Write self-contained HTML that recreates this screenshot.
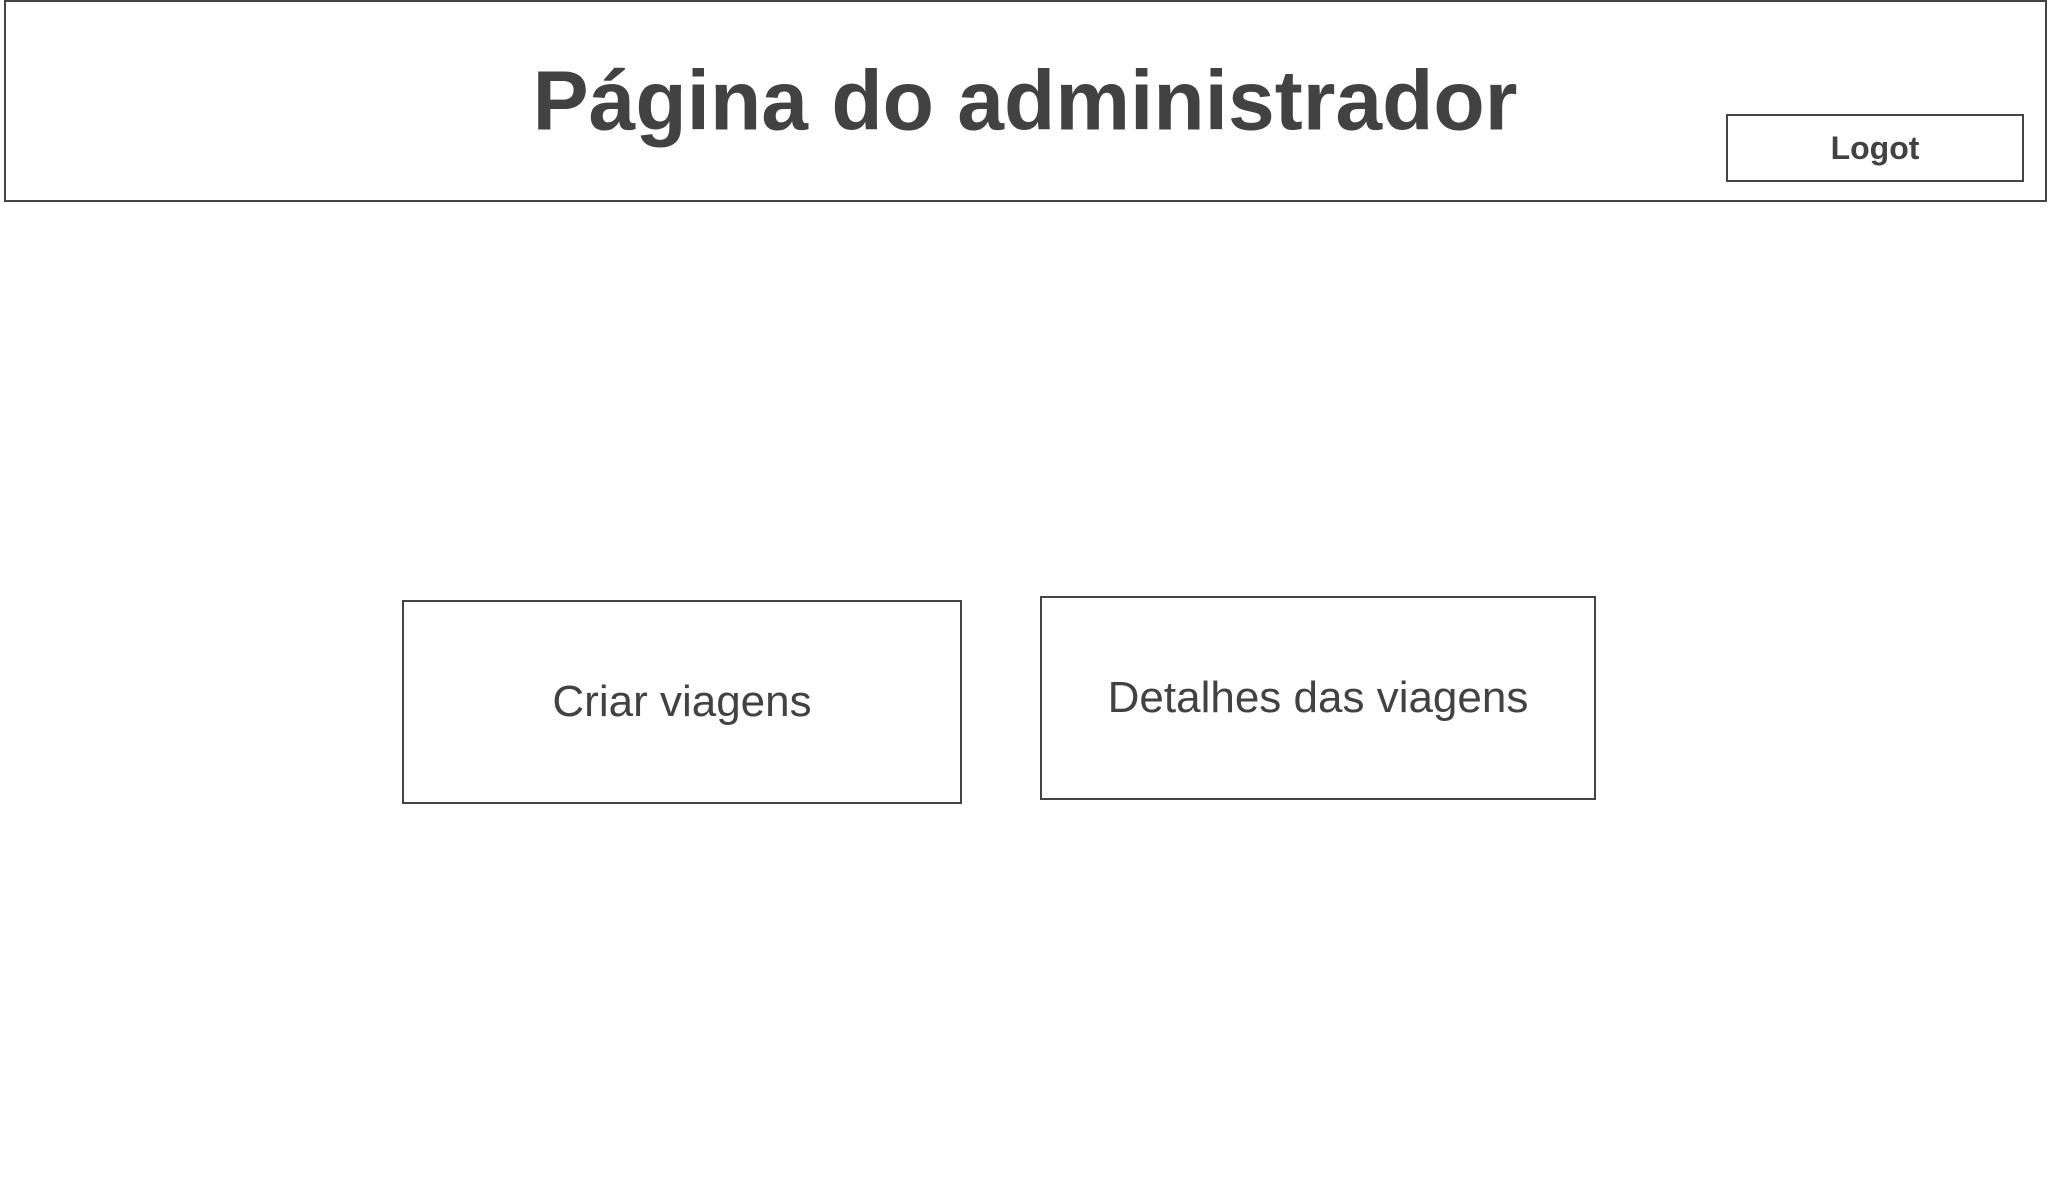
<!DOCTYPE html>
<html><head><meta charset="utf-8"><style>
html,body{margin:0;padding:0;background:#fff;width:2048px;height:1200px;overflow:hidden;font-family:"Liberation Sans",Arial,sans-serif;color:#424242}
.b{position:absolute;box-sizing:border-box;border:2px solid #444;display:flex;align-items:center;justify-content:center}
.t{position:absolute;white-space:nowrap;transform:translate(-50%,-50%)}
</style></head><body>
<div class="b" style="left:4px;top:0;width:2043px;height:202px"></div>
<div class="t" style="left:1025px;top:101px;font-size:84px;font-weight:bold">Página do administrador</div>
<div class="b" style="left:1726px;top:114px;width:298px;height:68px;font-size:32px;font-weight:bold">Logot</div>
<div class="b" style="left:402px;top:600px;width:560px;height:204px;font-size:44px">Criar viagens</div>
<div class="b" style="left:1040px;top:596px;width:556px;height:204px;font-size:44px">Detalhes das viagens</div>
</body></html>
